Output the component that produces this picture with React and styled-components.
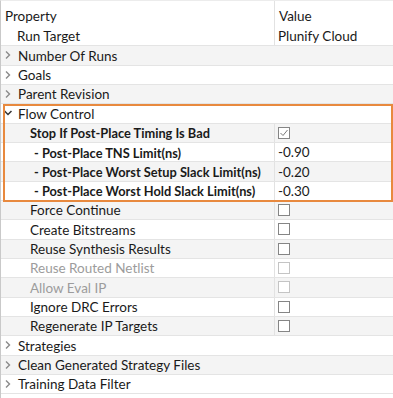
import React from "react";
import styled, { createGlobalStyle, css } from "styled-components";

const GlobalStyle = createGlobalStyle`
  body {
    margin: 0;
    background: #fff;
    font-family: Lato, "Open Sans", sans-serif;
    font-size: 13.5px;
    color: #1a1a1a;
  }
`;

const Table = styled.div`
  width: 393px;
  height: 398px;
  border-left: 1px solid #c9c9c9;
  border-top: 1px solid #ececec;
  box-sizing: border-box;
  overflow: hidden;
`;

const Header = styled.div`
  display: grid;
  grid-template-columns: 273px 1fr;
  height: 26px;
  background: #fff;
`;

const HeadCell = styled.div`
  display: flex;
  align-items: center;
  padding-top: 3px;
  padding-left: 4px;
  ${({ $first }) =>
    !$first &&
    css`
      border-left: 1px solid #e2e2e2;
    `}
`;

const Row = styled.div`
  display: grid;
  grid-template-columns: 273px 1fr;
  height: 19.33px;
  box-sizing: border-box;
  background: ${({ $shade }) => ($shade ? "#f4f4f4" : "#fff")};
  border-bottom: ${({ $line }) => ($line ? "1px solid #e4e4e4" : "none")};
  color: ${({ $disabled }) => ($disabled ? "#9c9c9c" : "#1a1a1a")};
`;

const NameCell = styled.div`
  display: flex;
  align-items: center;
  padding-top: 2px;
  padding-left: ${({ $indent }) => $indent}px;
  white-space: nowrap;
  overflow: hidden;
  line-height: 1;
  ${({ $bold }) =>
    $bold &&
    css`
      font-weight: 700;
      font-size: 12.8px;
    `}
`;

const ValueCell = styled.div`
  display: flex;
  align-items: center;
  padding-top: 2px;
  padding-left: 3px;
  border-left: ${({ $divider }) => ($divider ? "1px solid #e2e2e2" : "none")};
  line-height: 1;
`;

const Chevron = styled.svg`
  width: 8px;
  height: 10px;
  margin-top: -2px;
  margin-right: 6px;
  flex-shrink: 0;
`;

const Box = styled.span`
  width: 12px;
  height: 12px;
  margin-top: -2px;
  box-sizing: border-box;
  border: 1px solid ${({ $disabled }) => ($disabled ? "#c4c4c4" : "#858585")};
  background: #fff;
  display: flex;
  align-items: center;
  justify-content: center;
`;

const Group = styled.div`
  position: relative;
  &::after {
    content: "";
    position: absolute;
    top: 0;
    left: 2px;
    right: 0;
    bottom: -1px;
    border: 2px solid #e8893e;
    pointer-events: none;
  }
`;

const Arrow = ({ open }) => (
  <Chevron viewBox="0 0 8 10">
    {open ? (
      <polyline points="0.5,3 4,6.5 7.5,3" fill="none" stroke="#333" strokeWidth="1.5" />
    ) : (
      <polyline points="2,1.5 5.5,5 2,8.5" fill="none" stroke="#8a8a8a" strokeWidth="1.4" />
    )}
  </Chevron>
);

const Check = ({ checked, disabled }) => (
  <Box $disabled={disabled}>
    {checked && (
      <svg width="10" height="10" viewBox="0 0 10 10">
        <polyline points="1.5,5 4,7.5 8.5,2" fill="none" stroke="#7a7a7a" strokeWidth="1" />
      </svg>
    )}
  </Box>
);

const flowRows = [
  { name: "Stop If Post-Place Timing Is Bad", bold: true, indent: 29, check: true, checked: true },
  { name: "- Post-Place TNS Limit(ns)", bold: true, indent: 33, value: "-0.90" },
  { name: "- Post-Place Worst Setup Slack Limit(ns)", bold: true, indent: 33, value: "-0.20" },
  { name: "- Post-Place Worst Hold Slack Limit(ns)", bold: true, indent: 33, value: "-0.30" },
];

const moreRows = [
  { name: "Force Continue", check: true },
  { name: "Create Bitstreams", check: true },
  { name: "Reuse Synthesis Results", check: true },
  { name: "Reuse Routed Netlist", check: true, disabled: true },
  { name: "Allow Eval IP", check: true, disabled: true },
  { name: "Ignore DRC Errors", check: true },
  { name: "Regenerate IP Targets", check: true },
];

const PropRow = ({ row, shade }) => (
  <Row $shade={shade} $line $disabled={row.disabled}>
    <NameCell $indent={row.indent || 29} $bold={row.bold}>
      {row.name}
    </NameCell>
    <ValueCell $divider>
      {row.check ? <Check checked={row.checked} disabled={row.disabled} /> : row.value}
    </ValueCell>
  </Row>
);

const Category = ({ name, shade, open }) => (
  <Row $shade={shade} $line>
    <NameCell $indent={3}>
      <Arrow open={open} />
      {name}
    </NameCell>
    <ValueCell />
  </Row>
);

export default function App() {
  return (
    <>
      <GlobalStyle />
      <Table>
        <Header>
          <HeadCell $first>Property</HeadCell>
          <HeadCell>Value</HeadCell>
        </Header>
        <Row $line>
          <NameCell $indent={16}>Run Target</NameCell>
          <ValueCell $divider>Plunify Cloud</ValueCell>
        </Row>
        <Category name="Number Of Runs" shade />
        <Category name="Goals" />
        <Category name="Parent Revision" shade />
        <Group>
          <Category name="Flow Control" open />
          {flowRows.map((r, i) => (
            <PropRow key={r.name} row={r} shade={i % 2 === 0} />
          ))}
        </Group>
        {moreRows.map((r, i) => (
          <PropRow key={r.name} row={r} shade={i % 2 === 0} />
        ))}
        <Category name="Strategies" />
        <Category name="Clean Generated Strategy Files" shade />
        <Category name="Training Data Filter" />
      </Table>
    </>
  );
}
